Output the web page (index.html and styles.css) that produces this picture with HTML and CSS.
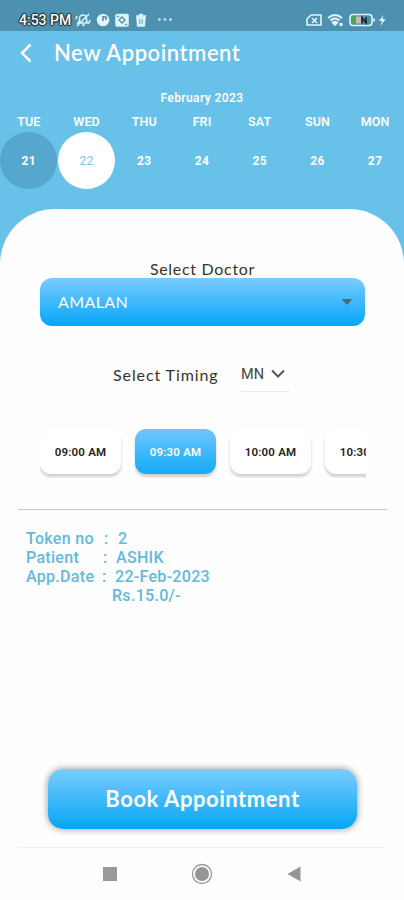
FILE: index.html
```html
<!DOCTYPE html>
<html lang="en">
<head>
<meta charset="utf-8">
<title>New Appointment</title>
<link rel="stylesheet" href="styles.css">
</head>
<body>
<div class="screen">
  <div class="status">
    <span class="clock">4:53 PM</span>
    <svg class="status-left" width="104" height="16" viewBox="0 0 104 16" fill="none" stroke="#d9f1fa" stroke-width="1.6">
      <path d="M4 11h9l-1.5-2V6.500a3.500 3.500 0 0 0-7 0V9L3 11zM7 13h3M2 14L14 2M2 4l-1 3M15 8l-1 3"/>
      <circle cx="28" cy="8" r="5.500" fill="#e6f6fc"/>
      <path d="M28 4v5M28 5h3v3" stroke="#4c8fb0"/>
      <rect x="41" y="2.500" width="12" height="11.500" rx="1" fill="#e6f6fc"/>
      <path d="M47 5l3 3-3 3-3-3zM42 4l2 1M50 12l2 1" stroke="#4c8fb0" stroke-width="1.300"/>
      <path d="M61 4h10M64 2.500h4"/>
      <path d="M62 5h8l-.7 9h-6.600z" fill="#d9f1fa"/>
      <path d="M64.800 7v5M67.200 7v5" stroke="#6ea7c1" stroke-width="1"/>
      <g fill="#d9f1fa" stroke="none"><circle cx="84.500" cy="7.500" r="1.200"/><circle cx="90" cy="7.500" r="1.200"/><circle cx="95.500" cy="7.500" r="1.200"/></g>
    </svg>
    <svg class="status-right" width="82" height="16" viewBox="0 0 82 16" fill="none" stroke="#e2f5fc" stroke-width="1.600">
      <path d="M6 3h10v10H2V7z"/>
      <path d="M7 6l5 5M12 6l-5 5"/>
      <g stroke-width="2"><path d="M23 6q7-6 14 0M25.500 8.500q4.500-4 9 0"/></g>
      <path d="M27.500 10.500q2.500-2 5 0L30 13z" fill="#e2f5fc"/>
      <circle cx="36" cy="12.500" r="1" fill="#e2f5fc"/>
      <rect x="45" y="2.500" width="22" height="11" rx="3"/>
      <path d="M69 6.500v3"/>
      <rect x="47" y="4.500" width="8" height="7" fill="#4ba946" stroke="none"/>
      <rect x="51" y="4.500" width="5" height="7" fill="#c9b9bd" stroke="none"/>
      <path d="M57 11.500v-6l4 5.500v-6" stroke="#252525"/>
      <rect x="62.500" y="4.500" width="2" height="7" fill="#438d9a" stroke="none"/>
      <path d="M78.500 3L74 9h3l-1.500 5 5-7h-3z" fill="#e2f5fc" stroke="none"/>
    </svg>
  </div>
  <header class="header">
    <div class="title-row">
      <svg class="back" width="14" height="20" viewBox="0 0 14 20"><path d="M11.500 1.500L3 10l8.500 8.500" fill="none" stroke="#fff" stroke-width="2.500"/></svg>
      <h1>New Appointment</h1>
    </div>
    <div class="month">February 2023</div>
    <div class="week">
      <div class="day"><span>TUE</span><b class="date today">21</b></div>
      <div class="day"><span>WED</span><b class="date picked">22</b></div>
      <div class="day"><span>THU</span><b class="date">23</b></div>
      <div class="day"><span>FRI</span><b class="date">24</b></div>
      <div class="day"><span>SAT</span><b class="date">25</b></div>
      <div class="day"><span>SUN</span><b class="date">26</b></div>
      <div class="day"><span>MON</span><b class="date">27</b></div>
    </div>
  </header>
  <main class="sheet">
    <div class="label">Select Doctor</div>
    <div class="select">
      <span>AMALAN</span>
      <svg width="12" height="8" viewBox="0 0 12 8"><path d="M.5 1h11L6 7z" fill="#52697a"/></svg>
    </div>
    <div class="timing">
      <span class="timing-label">Select Timing</span>
      <span class="session">MN
        <svg width="14" height="10" viewBox="0 0 14 10"><path d="M1 1.500l6 6 6-6" fill="none" stroke="#555" stroke-width="2"/></svg>
      </span>
    </div>
    <div class="slots">
      <div class="slot">09:00 AM</div>
      <div class="slot active">09:30 AM</div>
      <div class="slot">10:00 AM</div>
      <div class="slot">10:30 AM</div>
    </div>
    <hr class="rule">
    <div class="details">
      <div><span class="key k1">Token no</span><span class="colon c1">:</span>2</div>
      <div><span class="key k2">Patient</span><span class="colon c2">:</span>ASHIK</div>
      <div><span class="key k3">App.Date</span><span class="colon c3">:</span>22-Feb-2023</div>
      <div class="price">Rs.15.0/-</div>
    </div>
    <div class="book">Book Appointment</div>
  </main>
  <nav class="nav">
    <svg width="14" height="14"><rect width="14" height="14" fill="#999"/></svg>
    <svg width="22" height="22" viewBox="0 0 22 22"><circle cx="11" cy="11" r="9.500" fill="none" stroke="#999" stroke-width="1.300"/><circle cx="11" cy="11" r="7" fill="#959595"/></svg>
    <svg width="14" height="16" viewBox="0 0 14 16"><path d="M13.500.5v15L.5 8z" fill="#959595"/></svg>
  </nav>
</div>
</body>
</html>
```
FILE: styles.css
```css
* { box-sizing: border-box; }
body { margin: 0; background: #fefefe; font-family: Roboto, sans-serif; }
.screen { width: 404px; height: 900px; display: flex; flex-direction: column; overflow: hidden; background: linear-gradient(#67c1e9 0 262px, #fefefe 262px); }
svg { display: block; flex: none; }

.status { height: 31px; padding: 12px 17px 0 19px; display: flex; align-items: flex-start; background: #4d91b1; }
.clock { width: 53px; font-size: 14px; line-height: 17px; font-weight: 500; color: #fff; white-space: nowrap; text-shadow: 1px 0 1px #222, -1px 0 1px #222, 0 1px 1px #222, 0 -1px 1px #222; }
.status-left { margin-left: 3px; }
.status-right { margin-left: auto; }

.header { height: 178px; color: #fff; background: #67c1e9; }
.title-row { height: 44px; display: flex; align-items: center; padding-left: 19px; }
.title-row h1 { margin: 0 0 0 21px; font: 600 22px/28px Lato, sans-serif; letter-spacing: 0.55px; white-space: nowrap; }
.month { margin-top: 15px; text-align: center; font-size: 12px; line-height: 16px; font-weight: 600; letter-spacing: 0.4px; }
.week { margin: 8px 0 0; display: grid; grid-template-columns: repeat(7, 1fr); }
.day { display: flex; flex-direction: column; align-items: center; font-size: 12.5px; line-height: 16px; font-weight: 600; letter-spacing: 0.1px; }
.date { width: 57px; height: 57px; margin-top: 2px; padding-top: 1px; border-radius: 50%; display: flex; align-items: center; justify-content: center; font-size: 12px; font-weight: 700; letter-spacing: 0.4px; }
.today { background: #56a7cd; }
.picked { background: #fff; color: #7cc4e4; font-weight: 400; }

.sheet { height: 638px; padding: 50px 39px 0 40px; border-radius: 55px 55px 0 0; background: #fefefe; }
.label { font: 400 16px/20px Lato, sans-serif; letter-spacing: 0.7px; text-align: center; color: #333; }
.select { height: 48px; margin-top: -1px; padding: 0 12px 0 18px; border-radius: 12px; display: flex; align-items: center; justify-content: space-between; color: #fff; font: 400 16px/20px Lato, sans-serif; letter-spacing: 0.4px; background: linear-gradient(#7accfd, #05a6fa); }
.timing { height: 35px; margin-top: 31px; display: flex; padding-left: 73px; align-items: center; }
.timing-label { width: 128px; font: 400 16px/20px Lato, sans-serif; letter-spacing: 0.9px; color: #333; white-space: nowrap; }
.session { width: 48px; height: 34px; display: flex; align-items: center; gap: 7px; border-bottom: 1px solid #e8e8e8; font-size: 14.5px; color: #444; }
.slots { height: 58px; margin: 28px -1px 0 0; padding: 9px 0 0; display: flex; gap: 14px; overflow: hidden; }
.slot { width: 81px; height: 45px; flex: none; border-radius: 11px; display: flex; align-items: center; justify-content: center; background: #fff; color: #222; font-size: 11.5px; font-weight: 600; letter-spacing: 0.2px; box-shadow: 0 3px 3px #d0d0d0; }
.active { color: #fff; background: linear-gradient(#6fc6fb, #14abf8); }
.rule { height: 1px; margin: 31px -22px 0 -22px; border: 0; background: #c9c9c9; }
.details { margin: 19px 0 0 -14px; font-size: 16px; line-height: 19px; font-weight: 500; letter-spacing: 0.3px; color: #61b9df; white-space: nowrap; }
.key, .colon { display: inline-block; }
.key { width: 78px; }
.k2 { width: 77px; }
.k3 { width: 76px; }
.colon { width: 14px; }
.c2 { width: 13px; }
.c3 { width: 13px; }
.price { padding-left: 86px; }
.book { height: 60px; margin: 164px 8px 0 8px; border-radius: 15px; display: flex; align-items: center; justify-content: center; color: #fff; font: 700 22px/28px Lato, sans-serif; letter-spacing: 0.55px; background: linear-gradient(#7accfd, #05a6f5); box-shadow: 0 0 6px 1px #aaa; }
.nav { height: 53px; margin: 0 17px; border-top: 1px solid #f1f1f1; display: flex; align-items: center; justify-content: space-between; padding: 0 86px 0 86px; }
```
